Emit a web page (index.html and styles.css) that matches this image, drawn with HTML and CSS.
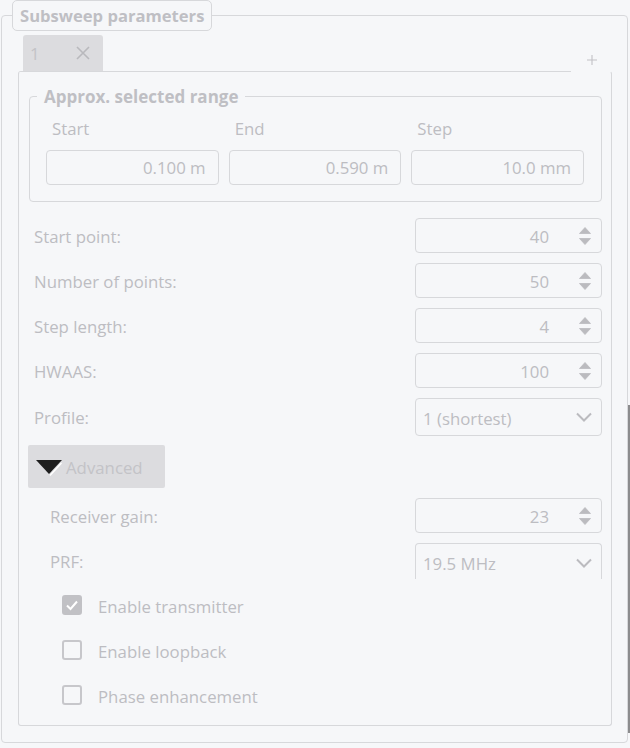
FILE: index.html
```html
<!DOCTYPE html>
<html>
<head>
<meta charset="utf-8">
<link rel="stylesheet" href="styles.css">
</head>
<body>
<fieldset class="outer">
  <legend class="outer-title">Subsweep parameters</legend>
  <div class="tabbar">
    <div class="tab">
      <span class="tab-label">1</span>
      <svg class="tab-close" width="14" height="14" viewBox="0 0 14 14"><path d="M1 1 L13 13 M13 1 L1 13" stroke="#b9b9bd" stroke-width="1.6" fill="none"/></svg>
    </div>
    <div class="tabbar-fill"></div>
    <div class="tab-add">
      <svg width="10" height="10" viewBox="0 0 10 10"><path d="M5 0 V10 M0 5 H10" stroke="#c2c2c6" stroke-width="1.1" fill="none"/></svg>
    </div>
  </div>
  <div class="pane">
    <fieldset class="range">
      <legend class="range-title">Approx. selected range</legend>
      <div class="range-grid">
        <div class="range-col"><div class="range-label">Start</div><div class="field">0.100 m</div></div>
        <div class="range-col"><div class="range-label">End</div><div class="field">0.590 m</div></div>
        <div class="range-col"><div class="range-label">Step</div><div class="field">10.0 mm</div></div>
      </div>
    </fieldset>

    <div class="form">
      <div class="label">Start point:</div>
      <div class="spin"><span class="spin-value">40</span><svg class="arrows" width="12" height="18" viewBox="0 0 12 18"><path d="M6 0.5 L11.5 6.5 H0.5 Z M0.5 11.5 H11.5 L6 17.5 Z" fill="#bbbbbf" stroke="#bbbbbf" stroke-width="0.8" stroke-linejoin="round"/></svg></div>
      <div class="label">Number of points:</div>
      <div class="spin"><span class="spin-value">50</span><svg class="arrows" width="12" height="18" viewBox="0 0 12 18"><path d="M6 0.5 L11.5 6.5 H0.5 Z M0.5 11.5 H11.5 L6 17.5 Z" fill="#bbbbbf" stroke="#bbbbbf" stroke-width="0.8" stroke-linejoin="round"/></svg></div>
      <div class="label">Step length:</div>
      <div class="spin"><span class="spin-value">4</span><svg class="arrows" width="12" height="18" viewBox="0 0 12 18"><path d="M6 0.5 L11.5 6.5 H0.5 Z M0.5 11.5 H11.5 L6 17.5 Z" fill="#bbbbbf" stroke="#bbbbbf" stroke-width="0.8" stroke-linejoin="round"/></svg></div>
      <div class="label">HWAAS:</div>
      <div class="spin"><span class="spin-value">100</span><svg class="arrows" width="12" height="18" viewBox="0 0 12 18"><path d="M6 0.5 L11.5 6.5 H0.5 Z M0.5 11.5 H11.5 L6 17.5 Z" fill="#bbbbbf" stroke="#bbbbbf" stroke-width="0.8" stroke-linejoin="round"/></svg></div>
      <div class="label">Profile:</div>
      <div class="combo"><span>1 (shortest)</span><svg class="chev" width="16" height="10" viewBox="0 0 16 10"><path d="M1 1.5 L8 8.5 L15 1.5" stroke="#bbbbbf" stroke-width="2" fill="none"/></svg></div>
    </div>

    <button class="advanced">
      <svg class="adv-tri" width="27" height="16" viewBox="0 0 27 16"><path d="M0 0 H26 L13 14 Z" fill="#1e1e1e"/><path d="M25.5 3 L14 15.5" stroke="#ffffff" stroke-width="1.4"/></svg>
      <span>Advanced</span>
    </button>

    <div class="form adv-form">
      <div class="label">Receiver gain:</div>
      <div class="spin"><span class="spin-value">23</span><svg class="arrows" width="12" height="18" viewBox="0 0 12 18"><path d="M6 0.5 L11.5 6.5 H0.5 Z M0.5 11.5 H11.5 L6 17.5 Z" fill="#bbbbbf" stroke="#bbbbbf" stroke-width="0.8" stroke-linejoin="round"/></svg></div>
      <div class="label">PRF:</div>
      <div class="combo combo-cut"><span>19.5 MHz</span><svg class="chev" width="16" height="10" viewBox="0 0 16 10"><path d="M1 1.5 L8 8.5 L15 1.5" stroke="#bbbbbf" stroke-width="2" fill="none"/></svg></div>
    </div>

    <div class="checks">
      <div class="check-row"><span class="box checked"><svg width="20" height="20" viewBox="0 0 20 20"><path d="M5 10.5 L8.5 14 L15 6.5" stroke="#ffffff" stroke-width="2" fill="none"/></svg></span><span class="check-text">Enable transmitter</span></div>
      <div class="check-row"><span class="box"></span><span class="check-text">Enable loopback</span></div>
      <div class="check-row"><span class="box"></span><span class="check-text">Phase enhancement</span></div>
    </div>
  </div>
</fieldset>
<div class="scroll-edge"></div>
</body>
</html>
```
FILE: styles.css
```css
* { box-sizing: border-box; }
html, body { margin: 0; padding: 0; }
body {
  background: #f6f7f9;
  font-family: "Open Sans", "Noto Sans", sans-serif;
  font-size: 16.8px;
  color: #bdbdc2;
  width: 630px;
  height: 748px;
  overflow: hidden;
  position: relative;
}
.outer {
  margin: 0 0 0 1px;
  width: 627px;
  height: 743px;
  border: 1px solid #d7d8db;
  border-radius: 4px;
  padding: 4px 15px 15px 16px;
  min-width: 0;
}
.outer-title {
  margin-left: -6px;
  padding: 1px 7px 0;
  border: 1px solid #d7d8db;
  border-radius: 5px;
  font-weight: 700;
  font-size: 16.6px;
  line-height: 28px;
  color: #bfbfc4;
}
.tabbar { display: flex; height: 36px; }
.tab {
  margin-left: 5px;
  width: 80px;
  height: 36px;
  background: #dcdcdf;
  border-radius: 3px 3px 0 0;
  display: flex;
  align-items: center;
  justify-content: space-between;
  padding: 0 13px 0 7px;
  color: #c3c3c7;
}
.tabbar-fill { flex: 1; }
.tab-add {
  width: 41px;
  display: flex;
  align-items: flex-end;
  justify-content: center;
  padding-bottom: 6px;
}
.pane {
  height: 655px;
  border: 1px solid #d7d8db;
  border-top-color: transparent;
  border-radius: 3px;
  background: linear-gradient(#d7d8db, #d7d8db) no-repeat left top / calc(100% - 41px) 1px;
  background-origin: border-box;
  padding: 14px 9px 0 10px;
}
.range {
  margin: 0;
  min-width: 0;
  border: 1px solid #d7d8db;
  border-radius: 4px;
  padding: 12px 17px 16px 16px;
}
.range-title {
  margin-left: -9px;
  padding: 1px 7px 0;
  font-weight: 700;
  font-size: 17px;
  line-height: 19px;
  color: #bfbfc4;
}
.range-grid {
  display: grid;
  grid-template-columns: repeat(3, 1fr);
  column-gap: 10px;
}
.range-label { padding: 1px 0 0 6px; line-height: 19px; margin-bottom: 12px; }
.field {
  height: 35px;
  border: 1px solid #d7d8db;
  border-radius: 4px;
  text-align: right;
  padding: 1px 12px 0 0;
  line-height: 32px;
}
.form {
  margin-top: 16px;
  display: grid;
  grid-template-columns: 1fr 187px;
  row-gap: 10px;
  align-items: center;
  padding-left: 5px;
}
.label { line-height: 20px; padding-top: 2px; }
.spin {
  height: 35px;
  border: 1px solid #d7d8db;
  border-radius: 4px;
  display: flex;
  justify-content: flex-end;
  align-items: center;
  padding-right: 10px;
}
.spin-value { margin-right: 30px; padding-top: 2px; }
.arrows { display: block; }
.combo {
  height: 38px;
  border: 1px solid #d7d8db;
  border-radius: 4px;
  display: flex;
  justify-content: space-between;
  align-items: center;
  padding: 2px 9px 0 7px;
}
.combo .chev { margin-top: -2px; }
.combo-cut {
  height: 36px;
  border-bottom: none;
  border-radius: 4px 4px 0 0;
  padding-top: 4px;
}
.chev { display: block; }
.advanced {
  margin: 9px 0 0 -1px;
  width: 137px;
  height: 43px;
  background: #dcdcdf;
  border: none;
  border-radius: 2px;
  display: flex;
  align-items: center;
  gap: 3px;
  padding: 0 0 0 8px;
  font: inherit;
  color: #c3c3c7;
}
.advanced span { padding-top: 2px; }
.adv-tri { display: block; margin-top: 2px; }
.adv-form { margin-top: 10px; padding-left: 21px; }
.checks {
  margin-top: 16px;
  padding-left: 33px;
  display: flex;
  flex-direction: column;
  gap: 25px;
}
.check-row { display: flex; align-items: center; gap: 16px; height: 20px; }
.check-text { padding-top: 3px; }
.box {
  width: 20px;
  height: 20px;
  border: 2px solid #c7c7cb;
  border-radius: 3px;
  flex: none;
  position: relative;
}
.box.checked { background: #c1c1c5; border-color: #c1c1c5; }
.box svg { position: absolute; left: -2px; top: -2px; }
.scroll-edge {
  position: absolute;
  left: 628px;
  top: 405px;
  width: 2px;
  height: 328px;
  background: #8c8c8e;
}
```
